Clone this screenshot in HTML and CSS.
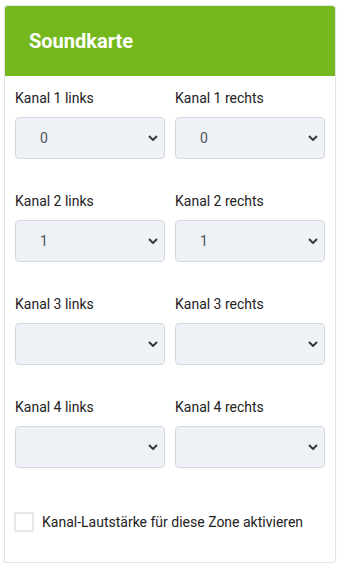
FILE: index.html
```html
<!DOCTYPE html>
<html lang="de">
<head>
  <meta charset="UTF-8">
  <meta name="viewport" content="width=device-width, initial-scale=1.0">
  <title>Soundkarte</title>
  <link rel="stylesheet" href="styles.css">
</head>
<body>
  <div class="card">
    <div class="card-header">Soundkarte</div>
    <div class="card-body">
      <div class="channel-grid">
        <div class="field">
          <label for="k1l">Kanal 1 links</label>
          <select id="k1l"><option>0</option></select>
        </div>
        <div class="field">
          <label for="k1r">Kanal 1 rechts</label>
          <select id="k1r"><option>0</option></select>
        </div>
        <div class="field">
          <label for="k2l">Kanal 2 links</label>
          <select id="k2l"><option>1</option></select>
        </div>
        <div class="field">
          <label for="k2r">Kanal 2 rechts</label>
          <select id="k2r"><option>1</option></select>
        </div>
        <div class="field">
          <label for="k3l">Kanal 3 links</label>
          <select id="k3l"><option></option></select>
        </div>
        <div class="field">
          <label for="k3r">Kanal 3 rechts</label>
          <select id="k3r"><option></option></select>
        </div>
        <div class="field">
          <label for="k4l">Kanal 4 links</label>
          <select id="k4l"><option></option></select>
        </div>
        <div class="field">
          <label for="k4r">Kanal 4 rechts</label>
          <select id="k4r"><option></option></select>
        </div>
      </div>
      <label class="check">
        <input type="checkbox" id="zoneVolume">
        <span class="box"></span>
        <span>Kanal-Lautstärke für diese Zone aktivieren</span>
      </label>
    </div>
  </div>
</body>
</html>
```

FILE: styles.css
```css
body { margin: 0; padding: 5px 5px 0 4px; font-family: Roboto, "Liberation Sans", sans-serif; color: #222; background: #fff; }
.card { border: 1px solid #e3e3e3; border-radius: 3px; box-shadow: 0 1px 2px rgba(0,0,0,0.06); background: #fff; }
.card-header { height: 70px; box-sizing: border-box; padding: 0 24px; display: flex; align-items: center; background: #74b81e; color: #fff; font-size: 20px; font-weight: bold; border-radius: 3px 3px 0 0; }
.card-body { padding: 12px 10px 30px; }
.channel-grid { display: grid; grid-template-columns: 1fr 1fr; column-gap: 10px; row-gap: 32px; }
.field label { display: block; font-size: 14px; line-height: 20px; margin-bottom: 9px; }
.field select { display: block; width: 100%; height: 42px; box-sizing: border-box; padding: 0 28px 0 24px; font-family: inherit; font-size: 14px; color: #4a5560; background: #eef1f5 url("data:image/svg+xml,%3Csvg xmlns='http://www.w3.org/2000/svg' width='10' height='6' viewBox='0 0 10 6'%3E%3Cpath d='M1 1l4 4 4-4' fill='none' stroke='%23343a40' stroke-width='2'/%3E%3C/svg%3E") no-repeat right 6px center; border: 1px solid #d5d9df; border-radius: 4px; -webkit-appearance: none; appearance: none; }
.check { display: flex; align-items: center; gap: 8px; margin-top: 44px; font-size: 14px; cursor: pointer; }
.check input { display: none; }
.check .box { width: 20px; height: 20px; box-sizing: border-box; border: 2px solid #e6e6e6; border-radius: 2px; margin-left: -1px; }
```
